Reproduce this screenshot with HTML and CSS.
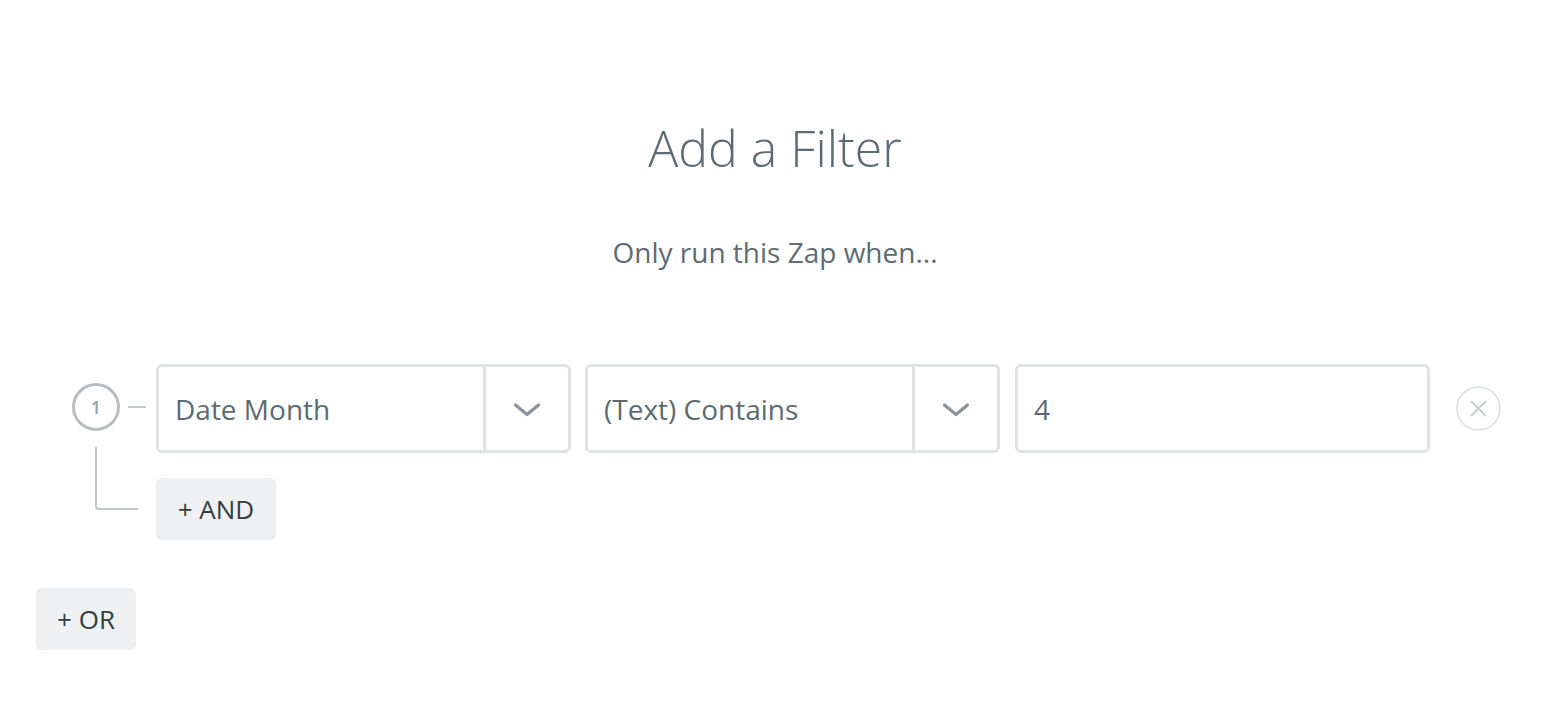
FILE: index.html
```html
<!DOCTYPE html>
<html>
<head>
<meta charset="utf-8">
<link rel="stylesheet" href="styles.css">
</head>
<body>
<div class="page">
  <header class="header">
    <h1 class="title">Add a Filter</h1>
    <p class="subtitle">Only run this Zap when...</p>
  </header>
  <section class="filters">
    <div class="group">
      <div class="gutter">
        <div class="num">1</div>
      </div>
      <div class="group-body">
        <div class="condition">
          <div class="select">
            <div class="select-value">Date Month</div>
            <div class="select-arrow">
              <svg width="28" height="16" viewBox="0 0 28 16"><path d="M2.5 3 L14 12.5 L25.5 3" fill="none" stroke="#89939a" stroke-width="3.2" stroke-linecap="round" stroke-linejoin="round"/></svg>
            </div>
          </div>
          <div class="select">
            <div class="select-value">(Text) Contains</div>
            <div class="select-arrow">
              <svg width="28" height="16" viewBox="0 0 28 16"><path d="M2.5 3 L14 12.5 L25.5 3" fill="none" stroke="#89939a" stroke-width="3.2" stroke-linecap="round" stroke-linejoin="round"/></svg>
            </div>
          </div>
          <div class="input">4</div>
          <button class="remove" aria-label="Remove">
            <svg width="45" height="45" viewBox="0 0 45 45"><circle cx="22.5" cy="22.5" r="21.5" fill="none" stroke="#d9dde0" stroke-width="1.5"/><path d="M15.5 15.5 L29.5 29.5 M29.5 15.5 L15.5 29.5" stroke="#c6cbce" stroke-width="1.8" stroke-linecap="round"/></svg>
          </button>
        </div>
        <button class="btn btn-and">+ AND</button>
      </div>
    </div>
    <button class="btn btn-or">+ OR</button>
  </section>
</div>
</body>
</html>
```

FILE: styles.css
```css
* { box-sizing: border-box; }
html, body { margin: 0; padding: 0; background: #fff; }
body {
  font-family: "Open Sans", "Liberation Sans", sans-serif;
  color: #5f6b72;
  width: 1550px;
  height: 724px;
  overflow: hidden;
}
.page { padding-top: 110px; }
.header { text-align: center; }
.title {
  margin: 0;
  font-weight: 300;
  font-size: 50px;
  line-height: 76px;
  color: #5c6a72;
}
.subtitle {
  margin: 47px 0 0;
  font-size: 28px;
  line-height: 38px;
  color: #5f6b72;
}
.filters {
  margin-top: 93px;
  padding: 0 36px;
}
.group {
  display: flex;
  padding-left: 36px;
}
.gutter {
  width: 84px;
  flex: none;
  position: relative;
  padding-top: 19px;
}
.num {
  width: 48px;
  height: 48px;
  border: 3px solid #b8bec2;
  border-radius: 50%;
  display: flex;
  align-items: center;
  justify-content: center;
  font-size: 18px;
  font-weight: 600;
  color: #9aa1a6;
  position: relative;
}
.num::after {
  content: "";
  position: absolute;
  left: 53px;
  top: 20px;
  width: 18px;
  height: 2px;
  background: #c6cacd;
}
.gutter::after {
  content: "";
  position: absolute;
  left: 23px;
  top: 83px;
  width: 41px;
  height: 61px;
  border-left: 2px solid #c3c8cb;
  border-bottom: 2px solid #c3c8cb;
  border-bottom-left-radius: 4px;
}
.group-body {
  flex: 1;
  padding-right: 50px;
}
.condition {
  display: flex;
  align-items: center;
  height: 89px;
}
.select, .input {
  flex: 0 0 415px;
  height: 89px;
  border: 3px solid #dfe3e5;
  border-radius: 6px;
  display: flex;
  align-items: stretch;
  font-size: 28px;
  color: #5d6a71;
}
.select { margin-right: 14px; }
.select + .select { margin-right: 15px; }
.select-value {
  flex: 1;
  display: flex;
  align-items: center;
  padding-left: 16px;
  border-right: 3px solid #dfe3e5;
}
.select-arrow {
  width: 82px;
  flex: none;
  display: flex;
  align-items: center;
  justify-content: center;
  padding-top: 2px;
}
.input {
  align-items: center;
  padding-left: 16px;
}
.remove {
  margin-left: 26px;
  width: 45px;
  height: 45px;
  padding: 0;
  border: 0;
  background: none;
  display: flex;
}
.btn {
  display: flex;
  align-items: center;
  justify-content: center;
  height: 62px;
  border: 0;
  border-radius: 6px;
  background: #eef0f2;
  font-family: "Open Sans", "Liberation Sans", sans-serif;
  font-size: 26px;
  color: #333e44;
  padding: 0;
}
.btn-and {
  margin-top: 25px;
  width: 120px;
}
.btn-or {
  margin-top: 48px;
  width: 100px;
}
```
